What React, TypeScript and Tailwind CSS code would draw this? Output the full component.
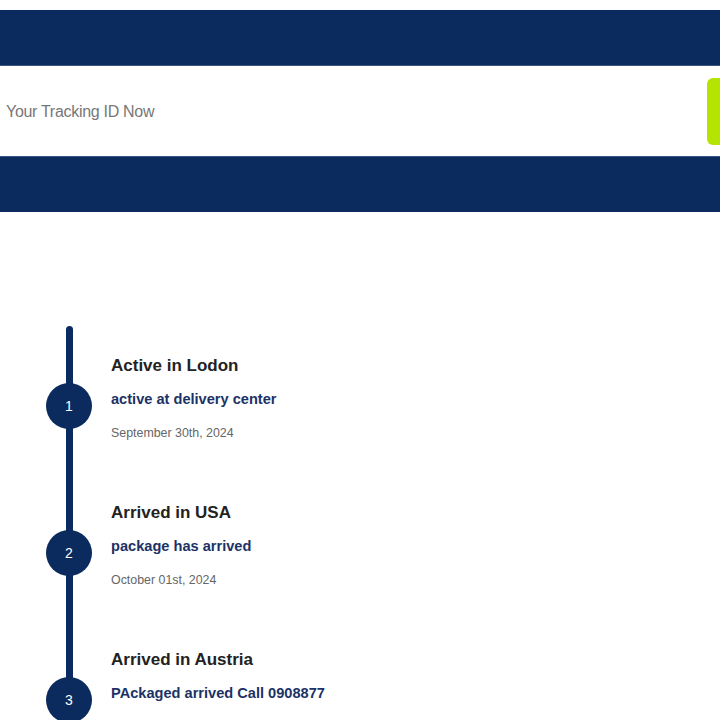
import React from "react";

const items = [
  { n: 1, title: "Active in Lodon", sub: "active at delivery center", date: "September 30th, 2024" },
  { n: 2, title: "Arrived in USA", sub: "package has arrived", date: "October 01st, 2024" },
  { n: 3, title: "Arrived in Austria", sub: "PAckaged arrived Call 0908877", date: "October 02nd, 2024" },
];

export default function App() {
  return (
    <div className="w-[720px] h-[720px] overflow-hidden bg-white" style={{ fontFamily: '"Liberation Sans", Arial, sans-serif' }}>
      <div className="h-[10px]" />
      <div className="h-[56px] bg-[#0b2a5e] border-b border-[#3a5584]" />
      <div className="h-[90px] flex items-center bg-white">
        <div className="flex-1 pl-[6px] pt-[2px] text-[16px] text-[#777] tracking-[-0.3px]">Your Tracking ID Now</div>
        <div className="h-[67px] w-[40px] -mr-[27px] rounded-[6px] bg-[#b5e400]" />
      </div>
      <div className="h-[56px] bg-[#0b2a5e] border-t border-[#3a5584]" />
      <div className="relative mt-[114px] pt-[28px]">
        <div className="absolute left-[66px] top-0 h-[500px] w-[7px] rounded-full bg-[#0b2a5e]" />
        {items.map((it) => (
          <div key={it.n} className="relative flex h-[147px]">
            <div className="w-[111px] shrink-0">
              <div className="ml-[46px] mt-[29px] flex h-[46px] w-[46px] items-center justify-center rounded-full bg-[#0b2a5e] text-[14px] text-white">
                {it.n}
              </div>
            </div>
            <div>
              <div className="text-[17px] font-bold leading-[24px] text-[#222]">{it.title}</div>
              <div className="mt-[11px] text-[14.6px] font-bold leading-[20px] text-[#1c3266]">{it.sub}</div>
              <div className="mt-[16px] text-[12.4px] leading-[16px] text-[#666]">{it.date}</div>
            </div>
          </div>
        ))}
      </div>
    </div>
  );
}
